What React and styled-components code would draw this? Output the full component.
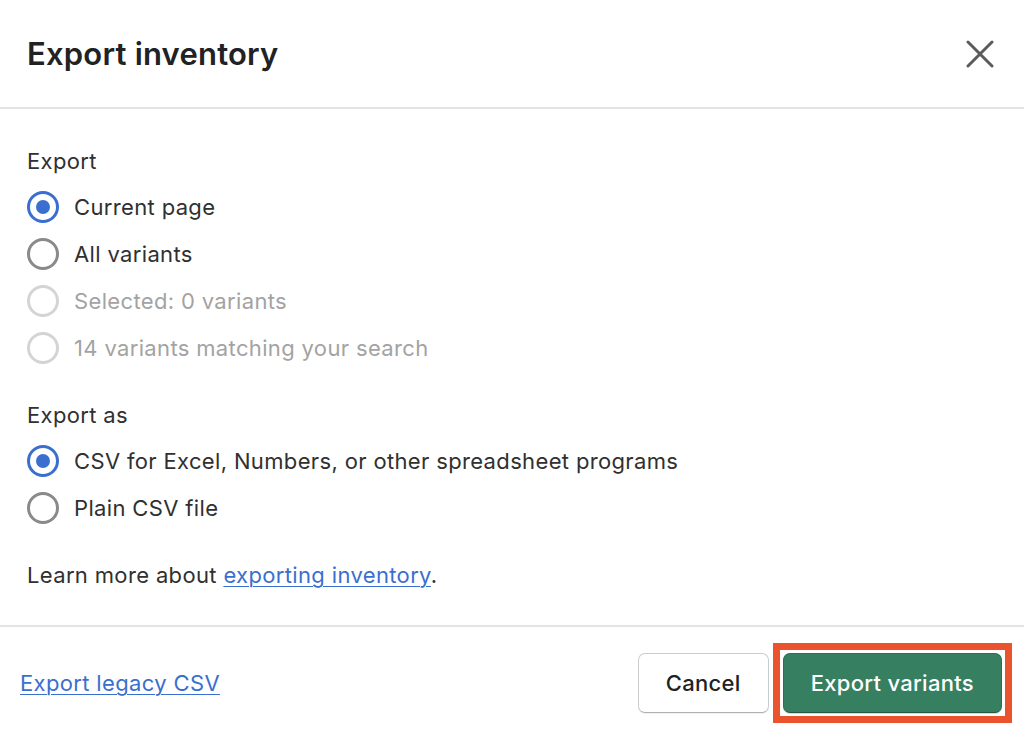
import styled, { createGlobalStyle } from "styled-components";

const GlobalStyle = createGlobalStyle`
    html, body {
        margin: 0;
        padding: 0;
        background: #ffffff;
    }
    body {
        font-family: Inter, "Noto Sans", "Liberation Sans", sans-serif;
        color: #303030;
        -webkit-font-smoothing: antialiased;
    }
`

const Modal = styled.div`
    width: 1024px;
    height: 733px;
    display: flex;
    flex-direction: column;
    background: #fff;
    overflow: hidden;
`

const Header = styled.header`
    height: 109px;
    box-sizing: border-box;
    display: flex;
    align-items: center;
    justify-content: space-between;
    padding: 0 29px 0 27px;
    border-bottom: 2px solid #e3e3e3;
`

const Title = styled.h1`
    margin: 0;
    font-size: 31px;
    font-weight: 600;
    color: #202223;
    letter-spacing: 0.2px;
`

const CloseButton = styled.button`
    border: 0;
    background: none;
    padding: 0;
    width: 30px;
    height: 30px;
    display: flex;
    align-items: center;
    justify-content: center;
    color: #5c5c5c;
    cursor: pointer;
`

const Body = styled.div`
    flex: 1;
    padding: 38px 27px 0;
    display: flex;
    flex-direction: column;
`

const Group = styled.fieldset`
    border: 0;
    margin: 0 0 30px;
    padding: 0;
    display: flex;
    flex-direction: column;
`

const GroupLabel = styled.legend`
    padding: 0;
    font-size: 22px;
    letter-spacing: 0.35px;
    line-height: 28px;
    margin-bottom: 8px;
    color: #303030;
`

const Option = styled.label`
    display: flex;
    align-items: center;
    gap: 15px;
    height: 47px;
    font-size: 22px;
    letter-spacing: 0.35px;
    color: ${p => (p.disabled ? "#a3a3a3" : "#303030")};
    cursor: ${p => (p.disabled ? "default" : "pointer")};
`

const Radio = styled.span`
    box-sizing: border-box;
    width: 32px;
    height: 32px;
    border-radius: 50%;
    border: 3px solid ${p => (p.checked ? "#3a6fd0" : p.disabled ? "#d4d4d4" : "#8a8a8a")};
    display: flex;
    align-items: center;
    justify-content: center;
    flex-shrink: 0;

    &::after {
        content: "";
        width: 14px;
        height: 14px;
        border-radius: 50%;
        background: #3a6fd0;
        display: ${p => (p.checked ? "block" : "none")};
    }
`

const Note = styled.p`
    margin: 0;
    font-size: 22px;
    letter-spacing: 0.35px;
    line-height: 28px;
    color: #303030;
`

const Link = styled.a`
    color: #3a6fd0;
    text-decoration: underline;
    text-underline-offset: 3px;
    text-decoration-thickness: 1px;
`

const Footer = styled.footer`
    border-top: 2px solid #e3e3e3;
    height: 108px;
    box-sizing: border-box;
    padding: 26px 22px 0 20px;
    display: flex;
    align-items: flex-start;
    justify-content: space-between;
`

const LegacyLink = styled(Link)`
    font-size: 22px;
    letter-spacing: 0.35px;
    line-height: 60px;
`

const Actions = styled.div`
    display: flex;
    align-items: center;
    gap: 14px;
`

const Highlight = styled.span`
    display: flex;
    margin: -10px;
    padding: 3px;
    border: 7px solid #eb532e;
`

const Button = styled.button`
    height: 60px;
    box-sizing: border-box;
    padding: 0 27px;
    border-radius: 7px;
    font-family: inherit;
    font-size: 22px;
    letter-spacing: 0.3px;
    font-weight: 500;
    cursor: pointer;
    border: 1px solid ${p => (p.primary ? "#2f6e53" : "#c9cccf")};
    border-bottom-color: ${p => (p.primary ? "#245a43" : "#aeb1b4")};
    background: ${p => (p.primary ? "#367f60" : "#ffffff")};
    color: ${p => (p.primary ? "#ffffff" : "#202223")};
    box-shadow: ${p => (p.primary ? "0 1px 0 rgba(0,0,0,0.15)" : "0 1px 0 rgba(0,0,0,0.05)")};
`

const exportOptions = [
    { label: "Current page", checked: true },
    { label: "All variants" },
    { label: "Selected: 0 variants", disabled: true },
    { label: "14 variants matching your search", disabled: true },
]

const formatOptions = [
    { label: "CSV for Excel, Numbers, or other spreadsheet programs", checked: true },
    { label: "Plain CSV file" },
]

const RadioList = ({ legend, options }) => (
    <Group>
        <GroupLabel>{legend}</GroupLabel>
        {options.map(opt => (
            <Option key={opt.label} disabled={opt.disabled}>
                <Radio checked={opt.checked} disabled={opt.disabled} />
                {opt.label}
            </Option>
        ))}
    </Group>
)

const App = () => (
    <>
        <GlobalStyle />
        <Modal>
            <Header>
                <Title>Export inventory</Title>
                <CloseButton aria-label="Close">
                    <svg width="28" height="28" viewBox="0 0 28 28" fill="none" stroke="currentColor" strokeWidth="3" strokeLinecap="round">
                        <path d="M2 2 L26 26 M26 2 L2 26" />
                    </svg>
                </CloseButton>
            </Header>
            <Body>
                <RadioList legend="Export" options={exportOptions} />
                <RadioList legend="Export as" options={formatOptions} />
                <Note>
                    Learn more about <Link href="#">exporting inventory</Link>.
                </Note>
            </Body>
            <Footer>
                <LegacyLink href="#">Export legacy CSV</LegacyLink>
                <Actions>
                    <Button>Cancel</Button>
                    <Highlight>
                        <Button primary>Export variants</Button>
                    </Highlight>
                </Actions>
            </Footer>
        </Modal>
    </>
)

export default App
